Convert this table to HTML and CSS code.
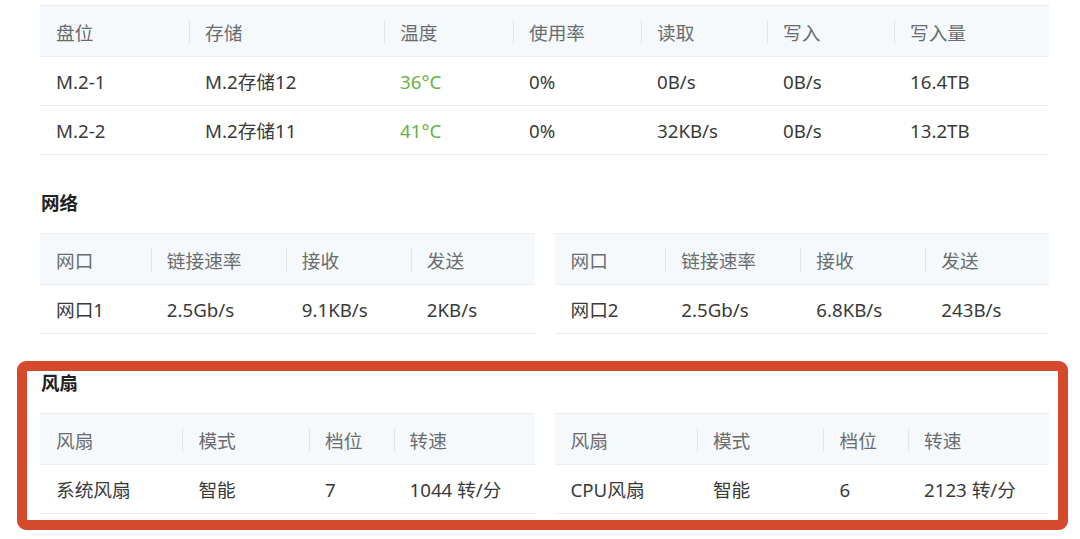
FILE: index.html
```html
<!DOCTYPE html>
<html lang="zh-CN">
<head>
<meta charset="utf-8">
<link rel="stylesheet" href="styles.css">
</head>
<body>
<div class="page">
  <table class="grid storage">
    <colgroup>
      <col class="c149"><col class="c195"><col class="c129"><col class="c128"><col class="c126"><col class="c127"><col class="c155">
    </colgroup>
    <thead>
      <tr><th>盘位</th><th>存储</th><th>温度</th><th>使用率</th><th>读取</th><th>写入</th><th>写入量</th></tr>
    </thead>
    <tbody>
      <tr><td>M.2-1</td><td>M.2存储12</td><td class="ok">36°C</td><td>0%</td><td>0B/s</td><td>0B/s</td><td>16.4TB</td></tr>
      <tr><td>M.2-2</td><td>M.2存储11</td><td class="ok">41°C</td><td>0%</td><td>32KB/s</td><td>0B/s</td><td>13.2TB</td></tr>
    </tbody>
  </table>

  <section class="section">
    <h2 class="title">网络</h2>
    <div class="pair">
      <table class="grid net">
        <colgroup><col class="n1"><col class="n2"><col class="n3"><col class="n4"></colgroup>
        <thead><tr><th>网口</th><th>链接速率</th><th>接收</th><th>发送</th></tr></thead>
        <tbody><tr><td>网口1</td><td>2.5Gb/s</td><td>9.1KB/s</td><td>2KB/s</td></tr></tbody>
      </table>
      <table class="grid net">
        <colgroup><col class="n1"><col class="n2"><col class="n3"><col class="n4"></colgroup>
        <thead><tr><th>网口</th><th>链接速率</th><th>接收</th><th>发送</th></tr></thead>
        <tbody><tr><td>网口2</td><td>2.5Gb/s</td><td>6.8KB/s</td><td>243B/s</td></tr></tbody>
      </table>
    </div>
  </section>

  <section class="section fan-section">
    <h2 class="title">风扇</h2>
    <div class="pair">
      <table class="grid fan">
        <colgroup><col class="f1"><col class="f2"><col class="f3"><col class="f4"></colgroup>
        <thead><tr><th>风扇</th><th>模式</th><th>档位</th><th>转速</th></tr></thead>
        <tbody><tr><td>系统风扇</td><td>智能</td><td>7</td><td>1044 转/分</td></tr></tbody>
      </table>
      <table class="grid fan">
        <colgroup><col class="f1"><col class="f2"><col class="f3"><col class="f4"></colgroup>
        <thead><tr><th>风扇</th><th>模式</th><th>档位</th><th>转速</th></tr></thead>
        <tbody><tr><td>CPU风扇</td><td>智能</td><td>6</td><td>2123 转/分</td></tr></tbody>
      </table>
    </div>
    <div class="highlight"></div>
  </section>
</div>
</body>
</html>
```

FILE: styles.css
```css
* { box-sizing: border-box; }

html, body {
  margin: 0;
  padding: 0;
  background: #ffffff;
}

body {
  font-family: "Noto Sans", "Noto Sans CJK SC", sans-serif;
  font-size: 18.7px;
  color: #3a3a3a;
}

.page {
  padding: 5px 31px 26px 40px;
}

.grid {
  width: 100%;
  border-collapse: collapse;
  table-layout: fixed;
  border-top: 1px solid #e9edf0;
}

.grid th,
.grid td {
  text-align: left;
  font-weight: 400;
  line-height: 26px;
  padding-left: 16px;
  padding-right: 4px;
  white-space: nowrap;
  border-bottom: 1px solid #e9edf0;
}

.grid th {
  position: relative;
  height: 51px;
  padding-top: 14px;
  padding-bottom: 10px;
  background: #f5f9fb;
  color: #6a6d70;
}

.grid th + th::before {
  content: "";
  position: absolute;
  left: 0;
  top: 14px;
  width: 1px;
  height: 24px;
  background: #e2e6e9;
}

.grid td {
  height: 49px;
  padding-top: 12px;
  padding-bottom: 10px;
  color: #3a3a3a;
}

.grid td.ok {
  color: #69b244;
}

.c149 { width: 149px; }
.c195 { width: 195px; }
.c129 { width: 129px; }
.c128 { width: 128px; }
.c126 { width: 126px; }
.c127 { width: 127px; }
.c155 { width: 155px; }

.n1 { width: 22.4%; }
.n2 { width: 27.3%; }
.n3 { width: 25.3%; }
.n4 { width: 25%; }

.f1 { width: 28.8%; }
.f2 { width: 25.6%; }
.f3 { width: 17.1%; }
.f4 { width: 28.5%; }

.section {
  margin-top: 35px;
}

.title {
  margin: 0 0 17px 1px;
  font-size: 18.5px;
  line-height: 26px;
  font-weight: 700;
  color: #222222;
}

.pair {
  display: flex;
  gap: 20px;
}

.pair .grid {
  flex: 1 1 0;
  min-width: 0;
}

.fan-section {
  position: relative;
  margin-top: 36px;
}

.highlight {
  position: absolute;
  top: -9px;
  left: -23px;
  right: -19px;
  bottom: -16px;
  border: 10px solid #d54a2c;
  border-radius: 9px;
  pointer-events: none;
}
```
